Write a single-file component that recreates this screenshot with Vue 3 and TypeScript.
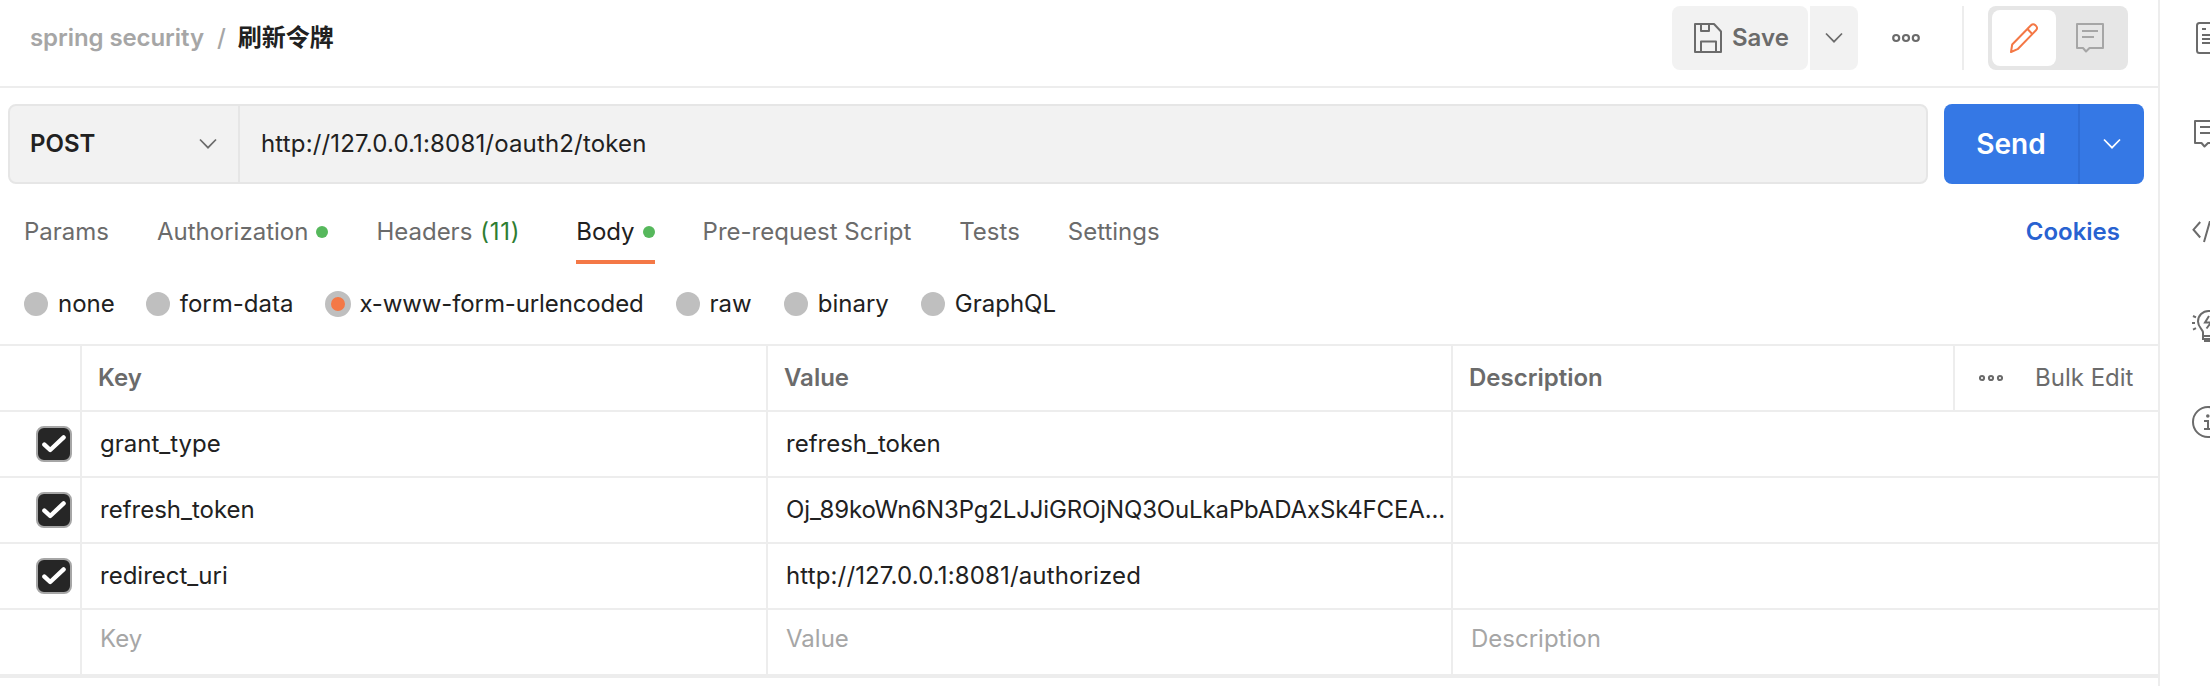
<script setup lang="ts">
interface Tab {
  label: string
  count?: string
  dot?: boolean
  active?: boolean
}

interface Param {
  key: string
  value: string
  kind: string
}

const tabs: Tab[] = [
  { label: 'Params' },
  { label: 'Authorization', dot: true },
  { label: 'Headers', count: '(11)' },
  { label: 'Body', dot: true, active: true },
  { label: 'Pre-request Script' },
  { label: 'Tests' },
  { label: 'Settings' },
]

const bodyTypes: string[] = ['none', 'form-data', 'x-www-form-urlencoded', 'raw', 'binary', 'GraphQL']
const selectedType = 'x-www-form-urlencoded'

const params: Param[] = [
  { key: 'grant_type', value: 'refresh_token', kind: 'plain' },
  { key: 'refresh_token', value: 'Oj_89koWn6N3Pg2LJJiGROjNQ3OuLkaPbADAxSk4FCEA...', kind: 'token' },
  { key: 'redirect_uri', value: 'http://127.0.0.1:8081/authorized', kind: 'link' },
]
</script>

<template>
  <div class="app">
    <main class="main">
      <header class="header">
        <div class="crumbs">
          <span class="crumb">spring security</span>
          <span class="slash">/</span>
          <span class="crumb-current">刷新令牌</span>
        </div>
        <div class="actions">
          <button class="save">
            <svg width="28" height="30" viewBox="0 0 28 30" fill="none" stroke="#6b6b6b" stroke-width="2">
              <path d="M1 1H20L27 8.5V29H1Z M7 1V8H15V1 M7 29V18.5H22V29" stroke-linejoin="round" />
            </svg>
            <span>Save</span>
          </button>
          <button class="save-more">
            <svg width="18" height="12" viewBox="0 0 18 12" fill="none" stroke="#6b6b6b" stroke-width="1.7">
              <path d="M1 1.5L9 9.7L17 1.5" />
            </svg>
          </button>
          <svg class="dots" width="28" height="10" viewBox="0 0 28 10" fill="none" stroke="#6b6b6b" stroke-width="2.2">
            <circle cx="4.2" cy="5" r="3" />
            <circle cx="14" cy="5" r="3" />
            <circle cx="23.8" cy="5" r="3" />
          </svg>
          <div class="toggle">
            <div class="toggle-item on">
              <svg width="30" height="32" viewBox="0 0 30 32" fill="none" stroke="#f47846" stroke-width="2" stroke-linejoin="round">
                <path d="M2 30L3.2 22.5L22 3.3Q24.2 1.2 26.4 3.3L27 3.9Q29.2 6.1 27 8.3L8.6 27.2ZM18.5 7L23.5 12.2" />
              </svg>
            </div>
            <div class="toggle-item comment">
              <svg width="28" height="30" viewBox="0 0 28 30" fill="none" stroke="#a6a6a6" stroke-width="2" stroke-linejoin="round">
                <path d="M1 1H27V25H13.5L10 28.5L7 25H1ZM6 8H22M6 14H18" />
              </svg>
            </div>
          </div>
        </div>
      </header>

      <section class="request">
        <div class="url-box">
          <div class="method">
            <span>POST</span>
            <svg width="18" height="12" viewBox="0 0 18 12" fill="none" stroke="#6b6b6b" stroke-width="1.7">
              <path d="M1 1.5L9 9.7L17 1.5" />
            </svg>
          </div>
          <div class="url">http://127.0.0.1:8081/oauth2/token</div>
        </div>
        <div class="send">
          <span class="send-label">Send</span>
          <span class="send-more">
            <svg width="18" height="12" viewBox="0 0 18 12" fill="none" stroke="#fff" stroke-width="1.7">
              <path d="M1 1.5L9 9.7L17 1.5" />
            </svg>
          </span>
        </div>
      </section>

      <nav class="tabs">
        <div v-for="tab in tabs" :key="tab.label" class="tab" :class="{ active: tab.active }">
          <span>{{ tab.label }}</span>
          <span v-if="tab.count" class="count">{{ tab.count }}</span>
          <i v-if="tab.dot" class="dot"></i>
        </div>
        <a class="cookies">Cookies</a>
      </nav>

      <div class="types">
        <label v-for="t in bodyTypes" :key="t" class="type" :class="{ selected: t === selectedType }">
          <i class="radio"></i>
          <span>{{ t }}</span>
        </label>
      </div>

      <section class="table">
        <div class="row head">
          <div class="cell"></div>
          <div class="cell">Key</div>
          <div class="cell">Value</div>
          <div class="cell last">
            <span class="desc">Description</span>
            <div class="bulk">
              <svg width="24" height="8" viewBox="0 0 24 8" fill="none" stroke="#6b6b6b" stroke-width="2">
                <circle cx="3" cy="4" r="2.1" />
                <circle cx="12" cy="4" r="2.1" />
                <circle cx="21" cy="4" r="2.1" />
              </svg>
              <span>Bulk Edit</span>
            </div>
          </div>
        </div>
        <div v-for="p in params" :key="p.key" class="row">
          <div class="cell check">
            <span class="box">
              <svg width="24" height="20" viewBox="0 0 24 20" fill="none" stroke="#fff" stroke-width="4.4" stroke-linecap="round" stroke-linejoin="round">
                <path d="M2.4 10.6L8.2 16L21.6 3.4" />
              </svg>
            </span>
          </div>
          <div class="cell">{{ p.key }}</div>
          <div class="cell" :class="p.kind">{{ p.value }}</div>
          <div class="cell last"></div>
        </div>
        <div class="row empty">
          <div class="cell"></div>
          <div class="cell">Key</div>
          <div class="cell">Value</div>
          <div class="cell last">Description</div>
        </div>
      </section>
    </main>

    <aside class="rail">
      <svg class="doc" width="28" height="32" viewBox="0 0 28 32" fill="none" stroke="#6b6b6b" stroke-width="2">
        <rect x="1" y="1" width="26" height="30" rx="2.5" />
        <path d="M6 7H10M6 13H22M6 17H22M6 21H22" />
      </svg>
      <svg class="chat" width="30" height="28" viewBox="0 0 30 28" fill="none" stroke="#6b6b6b" stroke-width="2" stroke-linejoin="round">
        <path d="M1 1H29V23H14L10.5 26.5L7.5 23H1ZM6 7H24M6 13H18" />
      </svg>
      <svg class="code" width="34" height="22" viewBox="0 0 34 22" fill="none" stroke="#6b6b6b" stroke-width="2">
        <path d="M8.2 1L1.5 8.7L8.2 16.5M18 0L12 21M25 1L32 8.7L25 16.5" />
      </svg>
      <svg class="bulb" width="34" height="32" viewBox="0 0 34 32" fill="none" stroke="#6b6b6b" stroke-width="2">
        <path d="M1 6L4 7.4M0 13H3M1 19.6L4 18.2" />
        <path d="M11 25V22.5C11 19.5 6 17.5 6 11.5A10.5 10.5 0 0 1 27 11.5C27 17.5 22 19.5 22 22.5V25" />
        <path d="M11 24V29H22V24M10 26H23M12 31H21" />
        <path d="M17 6L13 12.5H19L14.5 18.5" />
      </svg>
      <svg class="info" width="32" height="32" viewBox="0 0 32 32" fill="none" stroke="#6b6b6b" stroke-width="2">
        <circle cx="16" cy="16" r="15" />
        <path d="M12 15H16V23M12 23H20" />
        <circle cx="15.8" cy="10" r="1.8" fill="#6b6b6b" stroke="none" />
      </svg>
    </aside>
  </div>
</template>

<style>
body {
  margin: 0;
  background: #fff;
  overflow: hidden;
}
</style>

<style scoped>
.app {
  display: flex;
  width: 2210px;
  height: 686px;
  overflow: hidden;
  box-sizing: border-box;
  background: #fff;
  color: #212121;
  font: 400 24px/32px Inter, 'Noto Sans CJK SC', sans-serif;
}
.app * {
  box-sizing: border-box;
}
svg {
  display: block;
  flex: none;
}
.main {
  width: 2160px;
  flex: none;
  border-right: 2px solid #ededed;
}
.header {
  display: flex;
  justify-content: space-between;
  height: 88px;
  padding: 6px 30px 0;
  border-bottom: 2px solid #ededed;
}
.crumbs {
  display: flex;
  align-items: center;
  height: 64px;
  font-weight: 600;
  color: #a6a6a6;
}
.crumb {
  letter-spacing: -0.08px;
}
.slash {
  margin: 0 12px 0 13px;
  font-weight: 500;
}
.crumb-current {
  color: #212121;
}
.actions {
  display: flex;
  align-items: center;
  height: 64px;
}
button {
  border: 0;
  padding: 0;
  font: inherit;
}
.save {
  display: flex;
  align-items: center;
  gap: 10px;
  width: 136px;
  height: 64px;
  padding-left: 22px;
  border-radius: 8px;
  background: #f2f2f2;
  color: #6b6b6b;
  font-weight: 600;
}
.save-more {
  display: flex;
  align-items: center;
  justify-content: center;
  width: 48px;
  height: 64px;
  margin-left: 2px;
  border-radius: 0 8px 8px 0;
  background: #f2f2f2;
}
.dots {
  margin: 0 42px 0 34px;
}
.toggle {
  position: relative;
  display: flex;
  width: 140px;
  height: 64px;
  margin-left: 26px;
  padding: 4px;
  border-radius: 8px;
  background: #e6e6e6;
}
.toggle::before {
  content: '';
  position: absolute;
  left: -26px;
  top: 0;
  width: 2px;
  height: 64px;
  background: #ededed;
}
.toggle-item {
  display: flex;
  align-items: center;
  justify-content: center;
  width: 64px;
  height: 56px;
  border-radius: 8px;
}
.toggle-item.on {
  background: #fff;
}
.toggle-item.comment {
  width: 68px;
}
.request {
  display: flex;
  gap: 16px;
  padding: 16px 14px 0 8px;
}
.url-box {
  display: flex;
  width: 1920px;
  height: 80px;
  border: 2px solid #e6e6e6;
  border-radius: 8px;
  background: #f2f2f2;
}
.method {
  display: flex;
  align-items: center;
  justify-content: space-between;
  width: 230px;
  padding: 0 21px 0 20px;
  border-right: 2px solid #e6e6e6;
  font-weight: 600;
}
.url {
  padding-left: 21px;
  line-height: 76px;
  letter-spacing: 0.16px;
}
.send {
  display: flex;
  width: 200px;
  height: 80px;
  border-radius: 8px;
  background: #3578e5;
  color: #fff;
}
.send-label {
  width: 136px;
  border-right: 2px solid #2f6dd5;
  font-size: 28px;
  font-weight: 600;
  line-height: 80px;
  text-align: center;
}
.send-more {
  display: flex;
  flex: 1;
  align-items: center;
  justify-content: center;
}
.tabs {
  display: flex;
  gap: 48px;
  height: 80px;
  padding: 32px 38px 0 24px;
  color: #6b6b6b;
}
.tab {
  display: flex;
  align-items: center;
  height: 48px;
  padding-bottom: 16px;
  gap: 8px;
}
.tab.active {
  color: #212121;
  border-bottom: 4px solid #f47846;
  padding-bottom: 12px;
}
.dot {
  width: 12px;
  height: 12px;
  border-radius: 50%;
  background: #56b85c;
}
.count {
  margin-right: 8px;
  color: #2d7d32;
  letter-spacing: 0.7px;
}
.cookies {
  margin-left: auto;
  color: #2862d1;
  font-weight: 600;
}
.types {
  display: flex;
  gap: 32px;
  height: 80px;
  padding: 24px 0 0 24px;
}
.type {
  display: flex;
  align-items: center;
  gap: 10px;
  height: 32px;
}
.type:first-child {
  margin-right: -1px;
}
.radio {
  width: 24px;
  height: 24px;
  border-radius: 50%;
  background: #bfbfbf;
}
.selected {
  gap: 8px;
  letter-spacing: -0.12px;
}
.selected .radio {
  width: 26px;
  height: 26px;
  border: 6px solid #bfbfbf;
  background: #f47846;
}
.table {
  border-top: 2px solid #ededed;
}
.row {
  display: grid;
  grid-template-columns: 82px 686px 685px 1fr;
  height: 66px;
  border-bottom: 2px solid #ededed;
}
.cell {
  padding-left: 18px;
  border-right: 2px solid #ededed;
  line-height: 64px;
  white-space: nowrap;
}
.cell.last {
  border-right: 0;
}
.token {
  letter-spacing: -0.14px;
}
.link {
  letter-spacing: 0.14px;
}
.head .cell {
  padding-left: 16px;
  color: #6b6b6b;
  font-weight: 600;
}
.head .last {
  display: flex;
  justify-content: space-between;
}
.bulk {
  display: flex;
  align-items: center;
  gap: 32px;
  width: 205px;
  padding-left: 24px;
  border-left: 2px solid #ededed;
  font-weight: 400;
}
.check {
  display: flex;
  align-items: center;
  justify-content: flex-end;
  padding: 0 8px 0 0;
}
.box {
  display: flex;
  align-items: center;
  justify-content: center;
  width: 36px;
  height: 36px;
  border: 2px solid #a6a6a6;
  border-radius: 8px;
  background: #262626;
}
.empty {
  height: 68px;
  border-bottom-width: 4px;
}
.empty .cell {
  color: #a6a6a6;
  line-height: 58px;
}
.rail {
  display: flex;
  flex-direction: column;
  flex: none;
  width: 50px;
  padding-top: 22px;
  overflow: hidden;
}
.doc {
  margin-left: 36px;
}
.chat {
  margin: 66px 0 0 34px;
}
.code {
  margin: 73px 0 0 32px;
}
.bulb {
  margin: 67px 0 0 32px;
}
.info {
  margin: 64px 0 0 32px;
}
</style>
